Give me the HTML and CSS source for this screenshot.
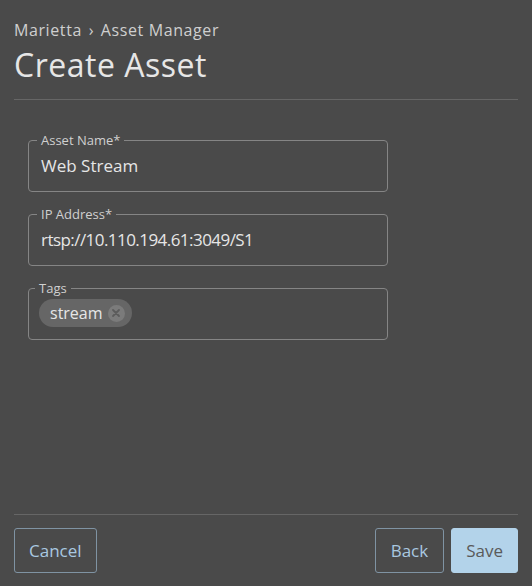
FILE: index.html
```html
<!DOCTYPE html>
<html>
<head>
<meta charset="utf-8">
<link rel="stylesheet" href="styles.css">
</head>
<body>
<div class="page">
  <header class="head">
    <div class="crumbs">Marietta <span class="sep">›</span> Asset Manager</div>
    <h1 class="title">Create Asset</h1>
  </header>
  <main class="form">
    <fieldset class="field">
      <legend class="label">Asset Name*</legend>
      <div class="value">Web Stream</div>
    </fieldset>
    <fieldset class="field">
      <legend class="label">IP Address*</legend>
      <div class="value url">rtsp://10.110.194.61:3049/S1</div>
    </fieldset>
    <fieldset class="field tags">
      <legend class="label">Tags</legend>
      <div class="chips">
        <span class="chip">stream
          <span class="chip-x"><svg width="10" height="10" viewBox="0 0 10 10"><path d="M2 2 L8 8 M8 2 L2 8" stroke="#5b5b5b" stroke-width="1.8" stroke-linecap="round"/></svg></span>
        </span>
      </div>
    </fieldset>
  </main>
  <footer class="foot">
    <button class="btn outline">Cancel</button>
    <div class="right">
      <button class="btn outline back">Back</button>
      <button class="btn primary">Save</button>
    </div>
  </footer>
</div>
</body>
</html>
```
FILE: styles.css
```css
html, body {
  margin: 0;
  padding: 0;
  background: #4a4a4a;
}
body {
  font-family: "Open Sans", Lato, sans-serif;
  color: #e2e2e2;
}
.page {
  height: 586px;
  box-sizing: border-box;
  padding: 0 14px;
  display: flex;
  flex-direction: column;
}
.head {
  border-bottom: 1px solid #666;
  padding-top: 19px;
  padding-bottom: 15px;
}
.crumbs {
  font-size: 16px;
  line-height: 22px;
  color: #cfcfcf;
  letter-spacing: 0.6px;
}
.sep {
  margin: 0 2px;
}
.title {
  margin: 5px 0 0;
  font-size: 32px;
  font-weight: 400;
  line-height: 38px;
  color: #e6e6e6;
  letter-spacing: 0.5px;
}
.form {
  flex: 1;
  display: flex;
  flex-direction: column;
  gap: 14px;
  padding: 32px 14px 0;
}
.field {
  width: 360px;
  box-sizing: border-box;
  margin: 0;
  padding: 0 12px 13px;
  border: 1px solid #858585;
  border-radius: 4px;
  min-width: 0;
}
.label {
  font-size: 13px;
  line-height: 16px;
  color: #d0d0d0;
  padding: 0 4px;
  margin-left: -4px;
}
.value {
  font-size: 17px;
  line-height: 24px;
  margin-top: 6px;
  color: #e6e6e6;
}
.url {
  letter-spacing: -0.55px;
}
.tags {
  padding: 0 10px 12px;
}
.chips {
  display: flex;
  margin-top: 3px;
}
.chip {
  display: inline-flex;
  align-items: center;
  height: 28px;
  box-sizing: border-box;
  padding: 0 7px 0 11px;
  border-radius: 14px;
  background: #666;
  font-size: 16px;
  color: #e6e6e6;
  gap: 5px;
}
.chip-x {
  width: 17px;
  height: 17px;
  border-radius: 50%;
  background: #7b7b7b;
  display: inline-flex;
  align-items: center;
  justify-content: center;
}
.foot {
  border-top: 1px solid #666;
  display: flex;
  justify-content: space-between;
  padding: 13px 0 13px;
}
.right {
  display: flex;
  gap: 7px;
}
.btn {
  height: 45px;
  box-sizing: border-box;
  font-family: "Open Sans", Lato, sans-serif;
  font-size: 17px;
  border-radius: 3px;
  padding: 0 14px;
  cursor: pointer;
}
.outline {
  background: transparent;
  border: 1px solid #7f93a3;
  color: #a9c8e0;
}
.outline.back {
  padding: 0 15px;
}
.primary {
  background: #b3d3ea;
  border: 1px solid #b3d3ea;
  color: #5a5a5a;
}
```
